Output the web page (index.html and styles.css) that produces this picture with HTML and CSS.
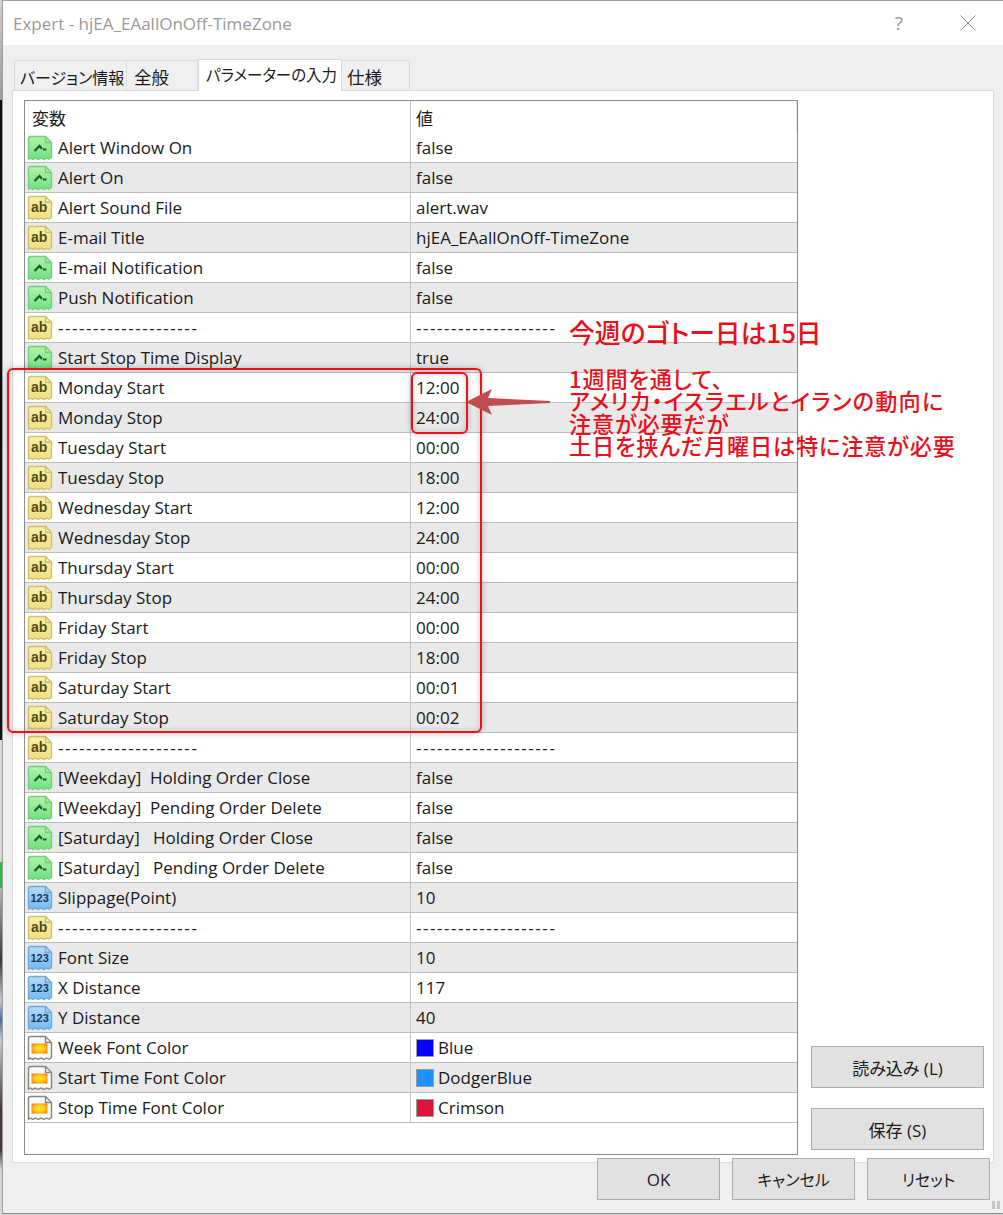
FILE: index.html
```html
<!DOCTYPE html>
<html lang="ja">
<head>
<meta charset="utf-8">
<title>Expert - hjEA_EAallOnOff-TimeZone</title>
<link rel="stylesheet" href="styles.css">
</head>
<body>
<svg class="defs" width="0" height="0" aria-hidden="true">
  <defs>
    <linearGradient id="gGreen" x1="0" y1="0" x2="0" y2="1"><stop offset="0" stop-color="#b4f2ac"/><stop offset="1" stop-color="#6fe07e"/></linearGradient>
    <linearGradient id="gYellow" x1="0" y1="0" x2="0" y2="1"><stop offset="0" stop-color="#f8f0ac"/><stop offset="1" stop-color="#f0e084"/></linearGradient>
    <linearGradient id="gBlue" x1="0" y1="0" x2="0" y2="1"><stop offset="0" stop-color="#b4daf8"/><stop offset="1" stop-color="#78b8ee"/></linearGradient>
    <radialGradient id="gOrange" cx="0.5" cy="0.5" r="0.6"><stop offset="0" stop-color="#ffe81a"/><stop offset="0.55" stop-color="#ffc81a"/><stop offset="1" stop-color="#ff7f1a"/></radialGradient>
    <symbol id="doc" viewBox="0 0 26 26">
      <path d="M1.500 3.500a2 2 0 0 1 2-2h15l6 6v15l-2.500 1.800-2.500-1.300-2.500 1.500-3-1.500-3 1.500-2.500-1.500-3 1.500-2-1.500-2 1z"/>
      <path d="M18.500 1.500v6h6" fill="none"/>
    </symbol>
  </defs>
</svg>

<div class="window">
  <header class="titlebar">
    <span class="title">Expert - hjEA_EAallOnOff-TimeZone</span>
    <span class="help">?</span>
    <svg class="close" width="16" height="16" viewBox="0 0 16 16"><path d="M.5.500l15 15M15.500.500l-15 15"/></svg>
  </header>

  <div class="content">
    <nav class="tabs">
      <span class="tab tab-a">バージョン情報</span>
      <span class="tab tab-b">全般</span>
      <span class="tab tab-active">パラメーターの入力</span>
      <span class="tab tab-d">仕様</span>
    </nav>

    <section class="panel">
      <div class="grid">
        <div class="row head"><div class="c1 plain">変数</div><div class="c2">値</div></div>

        <div class="row"><div class="c1"><svg class="ic green"><use href="#doc"/><path class="sw" d="M7.500 16l5-5 2.500 3M16 14.500h3.500"/></svg>Alert Window On</div><div class="c2">false</div></div>
        <div class="row alt"><div class="c1"><svg class="ic green"><use href="#doc"/><path class="sw" d="M7.500 16l5-5 2.500 3M16 14.500h3.500"/></svg>Alert On</div><div class="c2">false</div></div>
        <div class="row"><div class="c1"><svg class="ic yellow"><use href="#doc"/><text class="it" x="4" y="17">ab</text></svg>Alert Sound File</div><div class="c2">alert.wav</div></div>
        <div class="row alt"><div class="c1"><svg class="ic yellow"><use href="#doc"/><text class="it" x="4" y="17">ab</text></svg>E-mail Title</div><div class="c2">hjEA_EAallOnOff-TimeZone</div></div>
        <div class="row"><div class="c1"><svg class="ic green"><use href="#doc"/><path class="sw" d="M7.500 16l5-5 2.500 3M16 14.500h3.500"/></svg>E-mail Notification</div><div class="c2">false</div></div>
        <div class="row alt"><div class="c1"><svg class="ic green"><use href="#doc"/><path class="sw" d="M7.500 16l5-5 2.500 3M16 14.500h3.500"/></svg>Push Notification</div><div class="c2">false</div></div>
        <div class="row"><div class="c1"><svg class="ic yellow"><use href="#doc"/><text class="it" x="4" y="17">ab</text></svg><span class="dash">--------------------</span></div><div class="c2"><span class="dash">--------------------</span></div></div>
        <div class="row alt"><div class="c1"><svg class="ic green"><use href="#doc"/><path class="sw" d="M7.500 16l5-5 2.500 3M16 14.500h3.500"/></svg>Start Stop Time Display</div><div class="c2">true</div></div>
        <div class="row"><div class="c1"><svg class="ic yellow"><use href="#doc"/><text class="it" x="4" y="17">ab</text></svg>Monday Start</div><div class="c2">12:00</div></div>
        <div class="row alt"><div class="c1"><svg class="ic yellow"><use href="#doc"/><text class="it" x="4" y="17">ab</text></svg>Monday Stop</div><div class="c2">24:00</div></div>
        <div class="row"><div class="c1"><svg class="ic yellow"><use href="#doc"/><text class="it" x="4" y="17">ab</text></svg>Tuesday Start</div><div class="c2">00:00</div></div>
        <div class="row alt"><div class="c1"><svg class="ic yellow"><use href="#doc"/><text class="it" x="4" y="17">ab</text></svg>Tuesday Stop</div><div class="c2">18:00</div></div>
        <div class="row"><div class="c1"><svg class="ic yellow"><use href="#doc"/><text class="it" x="4" y="17">ab</text></svg>Wednesday Start</div><div class="c2">12:00</div></div>
        <div class="row alt"><div class="c1"><svg class="ic yellow"><use href="#doc"/><text class="it" x="4" y="17">ab</text></svg>Wednesday Stop</div><div class="c2">24:00</div></div>
        <div class="row"><div class="c1"><svg class="ic yellow"><use href="#doc"/><text class="it" x="4" y="17">ab</text></svg>Thursday Start</div><div class="c2">00:00</div></div>
        <div class="row alt"><div class="c1"><svg class="ic yellow"><use href="#doc"/><text class="it" x="4" y="17">ab</text></svg>Thursday Stop</div><div class="c2">24:00</div></div>
        <div class="row"><div class="c1"><svg class="ic yellow"><use href="#doc"/><text class="it" x="4" y="17">ab</text></svg>Friday Start</div><div class="c2">00:00</div></div>
        <div class="row alt"><div class="c1"><svg class="ic yellow"><use href="#doc"/><text class="it" x="4" y="17">ab</text></svg>Friday Stop</div><div class="c2">18:00</div></div>
        <div class="row"><div class="c1"><svg class="ic yellow"><use href="#doc"/><text class="it" x="4" y="17">ab</text></svg>Saturday Start</div><div class="c2">00:01</div></div>
        <div class="row alt"><div class="c1"><svg class="ic yellow"><use href="#doc"/><text class="it" x="4" y="17">ab</text></svg>Saturday Stop</div><div class="c2">00:02</div></div>
        <div class="row"><div class="c1"><svg class="ic yellow"><use href="#doc"/><text class="it" x="4" y="17">ab</text></svg><span class="dash">--------------------</span></div><div class="c2"><span class="dash">--------------------</span></div></div>
        <div class="row alt"><div class="c1"><svg class="ic green"><use href="#doc"/><path class="sw" d="M7.500 16l5-5 2.500 3M16 14.500h3.500"/></svg>[Weekday]&nbsp; Holding Order Close</div><div class="c2">false</div></div>
        <div class="row"><div class="c1"><svg class="ic green"><use href="#doc"/><path class="sw" d="M7.500 16l5-5 2.500 3M16 14.500h3.500"/></svg>[Weekday]&nbsp; Pending Order Delete</div><div class="c2">false</div></div>
        <div class="row alt"><div class="c1"><svg class="ic green"><use href="#doc"/><path class="sw" d="M7.500 16l5-5 2.500 3M16 14.500h3.500"/></svg>[Saturday]&nbsp;&nbsp; Holding Order Close</div><div class="c2">false</div></div>
        <div class="row"><div class="c1"><svg class="ic green"><use href="#doc"/><path class="sw" d="M7.500 16l5-5 2.500 3M16 14.500h3.500"/></svg>[Saturday]&nbsp;&nbsp; Pending Order Delete</div><div class="c2">false</div></div>
        <div class="row alt"><div class="c1"><svg class="ic blue"><use href="#doc"/><text class="it num" x="3.500" y="17">123</text></svg>Slippage(Point)</div><div class="c2">10</div></div>
        <div class="row"><div class="c1"><svg class="ic yellow"><use href="#doc"/><text class="it" x="4" y="17">ab</text></svg><span class="dash">--------------------</span></div><div class="c2"><span class="dash">--------------------</span></div></div>
        <div class="row alt"><div class="c1"><svg class="ic blue"><use href="#doc"/><text class="it num" x="3.500" y="17">123</text></svg>Font Size</div><div class="c2">10</div></div>
        <div class="row"><div class="c1"><svg class="ic blue"><use href="#doc"/><text class="it num" x="3.500" y="17">123</text></svg>X Distance</div><div class="c2">117</div></div>
        <div class="row alt"><div class="c1"><svg class="ic blue"><use href="#doc"/><text class="it num" x="3.500" y="17">123</text></svg>Y Distance</div><div class="c2">40</div></div>
        <div class="row"><div class="c1"><svg class="ic white"><use href="#doc"/><rect class="swatchbar" x="4.500" y="8.500" width="16" height="10"/></svg>Week Font Color</div><div class="c2"><i class="sq sq-blue"></i>Blue</div></div>
        <div class="row alt"><div class="c1"><svg class="ic white"><use href="#doc"/><rect class="swatchbar" x="4.500" y="8.500" width="16" height="10"/></svg>Start Time Font Color</div><div class="c2"><i class="sq sq-dodger"></i>DodgerBlue</div></div>
        <div class="row"><div class="c1"><svg class="ic white"><use href="#doc"/><rect class="swatchbar" x="4.500" y="8.500" width="16" height="10"/></svg>Stop Time Font Color</div><div class="c2"><i class="sq sq-crimson"></i>Crimson</div></div>
      </div>

      <aside class="side">
        <button class="btn btn-side">読み込み (L)</button>
        <button class="btn btn-side">保存 (S)</button>
      </aside>
    </section>

    <footer class="actions">
      <button class="btn btn-foot">OK</button>
      <button class="btn btn-foot btn-kana">キャンセル</button>
      <button class="btn btn-foot btn-kana">リセット</button>
    </footer>
  </div>
  <div class="grip"></div>
</div>

<div class="mark mark-big"></div>
<div class="mark mark-small"></div>
<svg class="arrow" width="86" height="26" viewBox="0 0 86 26"><path d="M0 13L26 0l-4 9 62 3v2l-62 3 4 9z"/></svg>
<p class="note note-top">今週のゴトー日は15日</p>
<p class="note note-main">1週間を通して、<br><span class="note-wide">アメリカ・イスラエルとイランの動向に</span><br>注意が必要だが<br>土日を挟んだ月曜日は特に注意が必要</p>
</body>
</html>
```
FILE: styles.css
```css
* { box-sizing: border-box; }
html, body { margin: 0; padding: 0; height: 1215px; overflow: hidden; }
body {
  position: relative;
  background: linear-gradient(180deg,
    #cfcfcf 0, #9a9a9a 100px,
    #0c0c0c 100px, #111 740px,
    #d8d8d8 740px, #d8d8d8 862px,
    #2fb84a 862px, #2fb84a 888px,
    #b5b5b5 888px, #3a3a3a 960px,
    #c8c8c8 1000px, #3f6fa8 1020px,
    #c8c8c8 1040px, #4a3a34 1110px,
    #4a3a34 1150px, #d4d4d4 1170px);
  font-family: "Open Sans", "Noto Sans CJK JP", sans-serif;
  font-size: 17px;
  font-feature-settings: "palt";
  color: #1a1a1a;
}
.defs { position: absolute; }

.window {
  position: relative;
  margin-left: 2px;
  height: 1214px;
  border-top: 1px solid #9e9e9e;
  border-left: 1px solid #9e9e9e;
  border-bottom: 1px solid #8a8a8a;
  display: flex;
  flex-direction: column;
}
.titlebar {
  height: 44px;
  flex: none;
  background: #fff;
  display: flex;
  align-items: center;
  padding: 0 27px 0 10px;
}
.title { flex: 1; color: #9a9a9a; font-size: 17px; }
.help { color: #9a9a9a; font-size: 19px; margin-right: 57px; }
.close path { stroke: #8f8f8f; fill: none; stroke-width: 1; }

.content {
  flex: 1;
  background: #efefef;
  padding: 14px 7px 0 9px;
  display: flex;
  flex-direction: column;
}
.tabs { display: flex; height: 31px; padding-left: 2px; align-items: flex-end; }
.tab {
  height: 30px;
  background: #f0f0f0;
  border: 1px solid #dcdcdc;
  border-bottom: 0;
  border-left: 0;
  padding: 3px 0 0 5px;
  font-size: 17.500px;
  white-space: nowrap;
}
.tab-a { width: 113px; border-left: 1px solid #dcdcdc; font-size: 16px; padding-top: 4px; }
.tab-b { width: 71px; padding-left: 7px; }
.tab-active {
  width: 144px;
  height: 32px;
  background: #fff;
  padding: 3px 0 0 7px;
  border-left: 1px solid #dcdcdc;
  margin-bottom: -1px;
  font-size: 15.500px;
  position: relative;
  z-index: 1;
}
.tab-d { width: 68px; }

.panel {
  height: 1073px;
  flex: none;
  width: 982px;
  background: #fff;
  border: 1px solid #dcdcdc;
  padding: 9px 0 0 11px;
  display: flex;
}
.grid {
  width: 774px;
  height: 1055px;
  flex: none;
  border: 1px solid #8c8c8c;
}
.row { display: flex; height: 30px; border-bottom: 1px solid #bdbdbd; }
.row.head { height: 32px; border-bottom: 0; }
.row.alt { background: #e9e9e9; }
.c1 {
  width: 386px;
  flex: none;
  display: flex;
  align-items: center;
  gap: 5px;
  padding-left: 2px;
  border-right: 1px solid #c4c4c4;
  white-space: pre;
}
.c1.plain { padding-left: 7px; }
.c2 { flex: 1; display: flex; align-items: center; padding-left: 5px; white-space: pre; }
.head .c2 { border-right: 1px solid #e2e2e2; flex: none; width: 386px; }
.dash { letter-spacing: 1.550px; }

.ic { width: 26px; height: 26px; flex: none; overflow: visible; }
.ic use { stroke-width: 1.400; }
.green use { fill: url(#gGreen); stroke: #72cf7c; }
.yellow use { fill: url(#gYellow); stroke: #d2c06a; }
.blue use { fill: url(#gBlue); stroke: #70a8da; }
.white use { fill: #f9f9f9; stroke: #858585; }
.sw { fill: none; stroke: #14602c; stroke-width: 2.200; }
.it { font-family: "Liberation Sans", sans-serif; font-weight: 700; font-size: 14px; fill: #544a10; }
.num { font-size: 11px; fill: #0e3a66; }
.swatchbar { fill: url(#gOrange); }

.sq { display: block; width: 18px; height: 18px; border: 1px solid #9c9c9c; margin-right: 4px; }
.sq-blue { background: #0000ff; }
.sq-dodger { background: #1e90ff; }
.sq-crimson { background: #dc143c; }

.side {
  width: 173px;
  margin-left: 13px;
  padding-top: 946px;
  display: flex;
  flex-direction: column;
  gap: 20px;
}
.btn {
  font: inherit;
  font-feature-settings: "palt";
  color: #1a1a1a;
  background: #e1e1e1;
  border: 1px solid #adadad;
  padding: 0;
}
.btn-side { height: 42px; }
.actions {
  display: flex;
  justify-content: flex-end;
  gap: 12px;
  padding-right: 6px;
  margin-top: -5px;
  position: relative;
}
.btn-foot { width: 123px; height: 42px; }
.btn-kana { font-size: 16px; }
.grip {
  position: absolute;
  right: 3px;
  bottom: 4px;
  width: 8px;
  height: 8px;
  background: repeating-linear-gradient(90deg, #c6c6c6 0 3px, transparent 3px 5px);
}

.mark {
  position: absolute;
  border: 2px solid #e8141c;
  border-radius: 6px;
  box-shadow: 0 0 6px rgba(0, 0, 0, .25), inset 0 0 6px rgba(0, 0, 0, .18);
}
.mark-big { left: 7px; top: 368px; width: 475px; height: 365px; }
.mark-small { left: 411px; top: 372px; width: 57px; height: 62px; }
.arrow { position: absolute; left: 466px; top: 389px; }
.arrow path { fill: #bf4c4e; }
.note {
  position: absolute;
  margin: 0;
  left: 569px;
  color: #e8101a;
  font-family: "Noto Sans CJK JP", sans-serif;
  font-weight: 500;
  white-space: nowrap;
}
.note-top { top: 316px; font-size: 25.800px; line-height: 32px; }
.note-main { top: 367px; font-size: 22.200px; line-height: 22.300px; letter-spacing: .8px; }
.note-wide { letter-spacing: 1.200px; }
```
